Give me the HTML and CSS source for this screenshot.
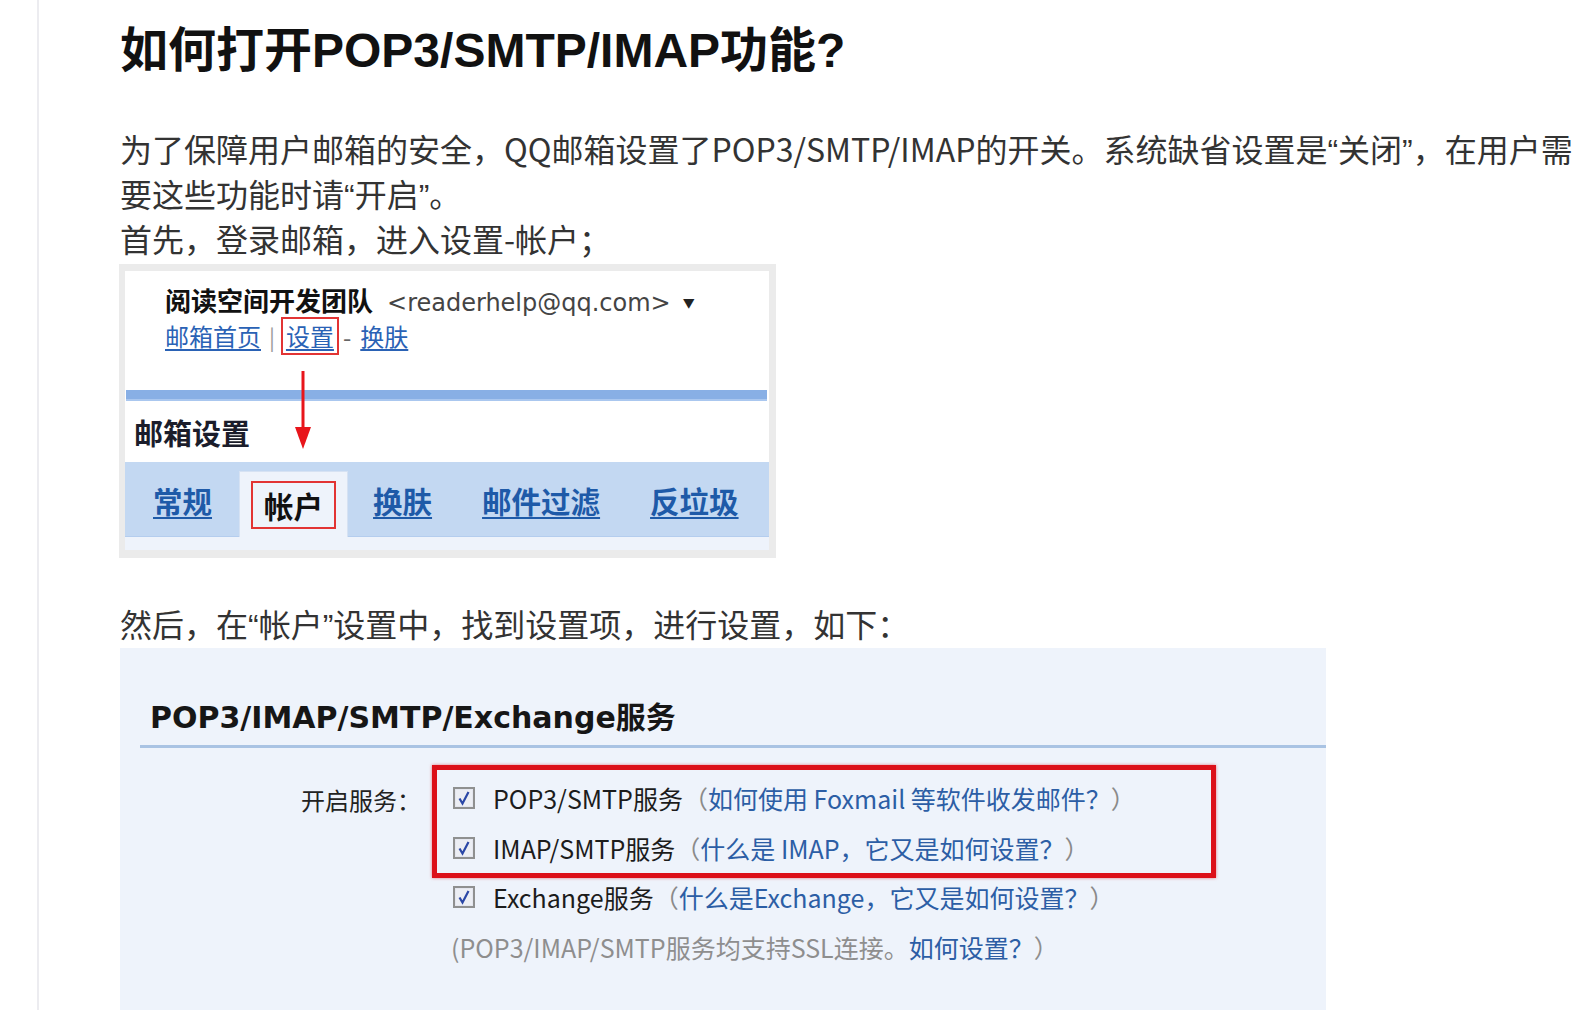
FILE: index.html
```html
<!DOCTYPE html>
<html lang="zh-CN">
<head>
<meta charset="utf-8">
<title>如何打开POP3/SMTP/IMAP功能?</title>
<link rel="stylesheet" href="styles.css">
</head>
<body>
<div class="page">
  <main class="doc">
    <h1 class="title">如何打开POP3/SMTP/IMAP功能?</h1>
    <p class="para">为了保障用户邮箱的安全，QQ邮箱设置了POP3/SMTP/IMAP的开关。系统缺省设置是<span class="q">“</span>关闭<span class="q">”</span>，在用户需<br>要这些功能时请<span class="q">“</span>开启<span class="q">”</span>。<br>首先，登录邮箱，进入设置-帐户；</p>

    <div class="shot1">
      <div class="s1">
        <div class="acct"><b class="team">阅读空间开发团队</b><span class="mail">&lt;readerhelp@qq.com&gt;</span><span class="caret">▼</span></div>
        <div class="links"><a class="lk">邮箱首页</a><span class="sep">|</span><span class="boxed"><a class="lk">设置</a></span><span class="dash">-</span><a class="lk">换肤</a></div>
        <div class="bar"></div>
        <div class="s1-title">邮箱设置</div>
        <div class="tabs">
          <span class="tab"><a class="tl">常规</a></span>
          <span class="tab active"><span class="redbox">帐户</span></span>
          <span class="tab"><a class="tl">换肤</a></span>
          <span class="tab"><a class="tl">邮件过滤</a></span>
          <span class="tab"><a class="tl">反垃圾</a></span>
        </div>
        <div class="strip"></div>
      </div>
      <svg class="arrow" width="16" height="78" viewBox="0 0 16 78"><line x1="8" y1="0" x2="8" y2="60" stroke="#e8151b" stroke-width="3"/><polygon points="0,56 16,56 8,78" fill="#e8151b"/></svg>
    </div>

    <p class="para p2">然后，在<span class="q">“</span>帐户<span class="q">”</span>设置中，找到设置项，进行设置，如下：</p>

    <div class="shot2">
      <div class="s2-title">POP3/IMAP/SMTP/Exchange服务</div>
      <div class="s2-rule"></div>
      <div class="s2-body">
        <div class="s2-label">开启服务：</div>
        <div class="s2-opts">
          <div class="redframe">
            <div class="opt">
              <svg class="cb" width="22" height="22" viewBox="0 0 22 22"><rect x="1" y="1" width="20" height="20" fill="#e4e6ee" stroke="#8f9090" stroke-width="2"/><rect x="3" y="3" width="16" height="16" fill="#eceef4"/><path d="M6.5 11.5 L9.5 16.5 L15.5 5" fill="none" stroke="#2b47a6" stroke-width="2.2"/></svg>
              <span class="k">POP3/SMTP服务</span><span class="pa">（</span><a class="ln">如何使用 Foxmail 等软件收发邮件？</a><span class="pa">）</span>
            </div>
            <div class="opt">
              <svg class="cb" width="22" height="22" viewBox="0 0 22 22"><rect x="1" y="1" width="20" height="20" fill="#e4e6ee" stroke="#8f9090" stroke-width="2"/><rect x="3" y="3" width="16" height="16" fill="#eceef4"/><path d="M6.5 11.5 L9.5 16.5 L15.5 5" fill="none" stroke="#2b47a6" stroke-width="2.2"/></svg>
              <span class="k">IMAP/SMTP服务</span><span class="pa">（</span><a class="ln">什么是 IMAP，它又是如何设置？</a><span class="pa">）</span>
            </div>
          </div>
          <div class="opt out">
            <svg class="cb" width="22" height="22" viewBox="0 0 22 22"><rect x="1" y="1" width="20" height="20" fill="#e4e6ee" stroke="#8f9090" stroke-width="2"/><rect x="3" y="3" width="16" height="16" fill="#eceef4"/><path d="M6.5 11.5 L9.5 16.5 L15.5 5" fill="none" stroke="#2b47a6" stroke-width="2.2"/></svg>
            <span class="k">Exchange服务</span><span class="pa">（</span><a class="ln">什么是Exchange，它又是如何设置？</a><span class="pa">）</span>
          </div>
          <div class="note">(POP3/IMAP/SMTP服务均支持SSL连接。<a class="ln">如何设置？</a>）</div>
        </div>
      </div>
    </div>
  </main>
</div>
</body>
</html>
```

FILE: styles.css
```css
* { box-sizing: border-box; }
html, body { margin: 0; padding: 0; background: #fff; }
body {
  font-family: "Noto Sans CJK SC", sans-serif;
  color: #333;
  overflow: hidden;
}
.page {
  margin-left: 37px;
  border-left: 2px solid #ececf0;
  min-height: 1010px;
  padding-left: 81px;
  padding-top: 21px;
}
.title {
  margin: 0 0 45px;
  font-family: "Liberation Sans", "Noto Sans CJK SC", sans-serif;
  font-weight: 700;
  font-size: 48px;
  line-height: 60px;
  color: #111;
  white-space: nowrap;
}
.para {
  margin: 0;
  font-size: 32px;
  line-height: 45px;
  white-space: nowrap;
  color: #333;
}
.q { font-family: "Liberation Sans", sans-serif; line-height: 1; }
.p2 { margin: 43px 0 2px; }

/* ---------- screenshot 1 ---------- */
.shot1 {
  position: relative;
  width: 657px;
  height: 294px;
  margin: 3px 0 0 -1px;
  background: #ebebeb;
  padding: 7px 7px 8px 6px;
}
.s1 {
  background: #fff;
  height: 279px;
}
.acct {
  padding: 11px 0 0 40px;
  height: 47px;
  line-height: 36px;
  font-size: 26px;
  color: #111;
  white-space: nowrap;
}
.team { font-weight: 700; }
.mail {
  font-family: "DejaVu Sans", sans-serif;
  font-size: 24px;
  color: #444;
  margin-left: 14px;
}
.caret { font-size: 12px; margin-left: 12px; vertical-align: 3px; color: #222; }
.links {
  display: flex;
  align-items: center;
  height: 36px;
  padding-left: 40px;
  font-size: 24px;
  white-space: nowrap;
}
.lk { color: #2a62b5; text-decoration: underline; text-underline-offset: 3px; line-height: 30px; }
.sep { color: #9a9a9a; margin: 0 6px 0 8px; font-size: 22px; }
.boxed {
  display: inline-flex;
  align-items: center;
  height: 38px;
  border: 2px solid #e23434;
  padding: 0 3px;
}
.dash { color: #666; margin: 0 9px 0 4px; }
.bar {
  margin: 36px 2px 0 1px;
  height: 11px;
  background: #88afe5;
  border-bottom: 2px solid #aac7ef;
}
.s1-title {
  margin: 11px 0 0 9px;
  line-height: 40px;
  height: 40px;
  font-size: 29px;
  font-weight: 700;
  color: #1b1d2b;
}
.tabs {
  display: flex;
  margin-top: 10px;
  height: 75px;
  padding-left: 3px;
  background: #c3d8f2;
  border-bottom: 1px solid #b4cdee;
}
.tab {
  display: flex;
  align-items: center;
  padding: 1px 25px 0;
  font-size: 29.5px;
  font-weight: 700;
}
.tl { color: #1e5aa8; text-decoration: underline; text-underline-offset: 4px; }
.tab.active {
  margin: 9px 0 -1px 2px;
  padding: 0 11px;
  background: #eef3fb;
  border: 1px solid #d6e2f3;
  border-bottom: 0;
}
.redbox {
  display: inline-flex;
  align-items: center;
  height: 48px;
  padding: 0 11px;
  border: 2px solid #e23434;
  color: #111;
}
.strip { height: 13px; background: #eef3fb; }
.arrow { position: absolute; left: 176px; top: 107px; }

/* ---------- screenshot 2 ---------- */
.shot2 {
  width: 1206px;
  min-height: 380px;
  background: #eef3fb;
  padding-top: 50px;
}
.s2-title {
  padding-left: 30px;
  font-family: "DejaVu Sans", "Noto Sans CJK SC", sans-serif;
  font-weight: 700;
  font-size: 30px;
  line-height: 40px;
  height: 40px;
  color: #161616;
  white-space: nowrap;
}
.s2-rule {
  margin: 7px 0 0 20px;
  height: 3px;
  background: #a9c3e3;
}
.s2-body {
  display: grid;
  grid-template-columns: 312px 784px;
  margin-top: 17px;
  font-size: 25px;
}
.s2-label {
  padding-left: 181px;
  margin-top: 10px;
  line-height: 50px;
  font-size: 24px;
  color: #222;
  white-space: nowrap;
}
.redframe {
  border: 5px solid #dc1019;
  padding-top: 3px;
  box-shadow: 0 0 3px rgba(220, 16, 25, 0.55);
  margin-bottom: -6px;
}
.opt {
  display: flex;
  align-items: center;
  height: 50px;
  padding-left: 16px;
  white-space: nowrap;
}
.opt.out { padding-left: 21px; }
.cb { flex: none; margin-right: 18px; }
.k { color: #1c1c1c; }
.pa { color: #8a8a8a; }
.ln { color: #2c5ea5; }
.note {
  height: 50px;
  line-height: 50px;
  padding-left: 19px;
  color: #8e8e8e;
  white-space: nowrap;
}
```
